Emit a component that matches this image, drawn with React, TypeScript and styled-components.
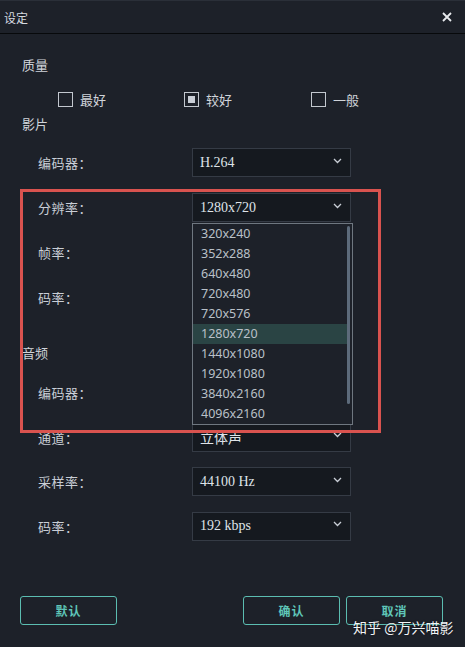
import React from "react";
import styled, { createGlobalStyle } from "styled-components";

const Global = createGlobalStyle`
  html, body { margin: 0; padding: 0; background: #1d2129; }
  #root { width: 465px; height: 647px; overflow: hidden; }
`;

const CJK = `"Noto Sans CJK SC", "Noto Sans", sans-serif`;
const SERIF = `"Liberation Serif", "Noto Sans CJK SC", serif`;

const Window = styled.div`
  position: relative;
  width: 465px;
  height: 647px;
  box-sizing: border-box;
  background: #1d2129;
  border-top: 1px solid #2a2f38;
  font-family: ${CJK};
  color: #c9ced6;
  display: flex;
  flex-direction: column;
`;

const TitleBar = styled.div`
  height: 33px;
  box-sizing: border-box;
  border-bottom: 1px solid #07090b;
  display: flex;
  align-items: center;
  justify-content: space-between;
  padding: 0 13px 0 4px;
  font-size: 12px;
  color: #d6dae0;
`;

const CloseBtn = styled.svg`
  width: 10px;
  height: 10px;
`;

const Body = styled.div`
  display: flex;
  flex-direction: column;
  padding: 0 0 0 22px;
  flex: 1;
`;

const SectionTitle = styled.div<{ $top: number }>`
  margin-top: ${(p) => p.$top}px;
  height: 20px;
  line-height: 20px;
  font-size: 13px;
  color: #d0d4da;
`;

const CheckRow = styled.div`
  margin-top: 14px;
  height: 20px;
  display: flex;
  align-items: center;
  padding-left: 36px;
`;

const CheckItem = styled.div<{ $w: number }>`
  width: ${(p) => p.$w}px;
  display: flex;
  align-items: center;
  gap: 7px;
  font-size: 13px;
  color: #d0d4da;
`;

const Box = styled.span<{ $checked?: boolean }>`
  width: 15px;
  height: 15px;
  box-sizing: border-box;
  border: 1.5px solid #c3c8cf;
  display: flex;
  align-items: center;
  justify-content: center;
  &::after {
    content: "";
    display: ${(p) => (p.$checked ? "block" : "none")};
    width: 7px;
    height: 7px;
    background: #c9ced6;
  }
`;

const Rows = styled.div<{ $top: number; $gap: number }>`
  margin-top: ${(p) => p.$top}px;
  display: flex;
  flex-direction: column;
  gap: ${(p) => p.$gap}px;
  padding-left: 16px;
`;

const Row = styled.div`
  height: 29px;
  display: grid;
  grid-template-columns: 154px 159px;
  align-items: center;
`;

const Label = styled.div`
  font-size: 13px;
  color: #c9ced6;
  letter-spacing: 0.5px;
`;

const Select = styled.div`
  height: 29px;
  box-sizing: border-box;
  border: 1px solid #353b45;
  background: #15191f;
  display: flex;
  align-items: center;
  justify-content: space-between;
  padding: 0 8px 0 7px;
  font-family: ${SERIF};
  font-size: 14px;
  color: #dfe3e8;
`;

const Chevron = styled.svg`
  width: 9px;
  height: 6px;
  margin-top: -4px;
  margin-left: auto;
`;

const Footer = styled.div`
  margin-top: auto;
  margin-bottom: 22px;
  display: flex;
  padding: 0 22px 0 20px;
  gap: 6px;
`;

const Spacer = styled.div`
  flex: 1;
`;

const Button = styled.div`
  width: 97px;
  height: 29px;
  box-sizing: border-box;
  border: 1px solid #5bbdb1;
  border-radius: 3px;
  display: flex;
  align-items: center;
  justify-content: center;
  font-size: 12px;
  font-weight: 700;
  color: #5fc6b8;
  letter-spacing: 1px;
`;

const Highlight = styled.div`
  position: absolute;
  left: 20px;
  top: 188px;
  width: 361px;
  height: 244px;
  box-sizing: border-box;
  border: 3px solid #d9534f;
  pointer-events: none;
`;

const Dropdown = styled.div`
  position: absolute;
  left: 192px;
  top: 222px;
  width: 161px;
  height: 202px;
  box-sizing: border-box;
  border: 1px solid #6f7780;
  background: #1d2129;
  padding: 0 5px 0 0;
  display: flex;
  flex-direction: column;
`;

const Option = styled.div<{ $active?: boolean }>`
  height: 20px;
  line-height: 20px;
  padding-left: 8px;
  font-family: "Noto Sans", "Open Sans", sans-serif;
  font-size: 12.5px;
  color: #b9c0c8;
  background: ${(p) => (p.$active ? "#2a4444" : "transparent")};
`;

const ScrollThumb = styled.div`
  position: absolute;
  right: 2px;
  top: 2px;
  width: 3px;
  height: 178px;
  border-radius: 2px;
  background: #5d6b7b;
`;

const Watermark = styled.div`
  position: absolute;
  left: 353px;
  top: 616px;
  font-size: 14px;
  color: #f2f4f6;
  white-space: nowrap;
  text-shadow: 0 0 2px rgba(0, 0, 0, 0.5);
`;

const ChevronIcon = () => (
  <Chevron viewBox="0 0 9 6">
    <path d="M1 1 L4.5 4.5 L8 1" fill="none" stroke="#c9ced6" strokeWidth="1.3" />
  </Chevron>
);

const Field = ({ label, value }: { label: string; value?: string }) => (
  <Row>
    <Label>{label}</Label>
    <Select>
      {value ? <span>{value}</span> : null}
      <ChevronIcon />
    </Select>
  </Row>
);

const resolutions = [
  "320x240",
  "352x288",
  "640x480",
  "720x480",
  "720x576",
  "1280x720",
  "1440x1080",
  "1920x1080",
  "3840x2160",
  "4096x2160",
];

export default function App() {
  return (
    <>
      <Global />
      <Window>
        <TitleBar>
          <span>设定</span>
          <CloseBtn viewBox="0 0 10 10">
            <path d="M1 1 L9 9 M9 1 L1 9" stroke="#e8ebee" strokeWidth="1.8" />
          </CloseBtn>
        </TitleBar>
        <Body>
          <SectionTitle $top={21}>质量</SectionTitle>
          <CheckRow>
            <CheckItem $w={126}>
              <Box />
              最好
            </CheckItem>
            <CheckItem $w={127}>
              <Box $checked />
              较好
            </CheckItem>
            <CheckItem $w={80}>
              <Box />
              一般
            </CheckItem>
          </CheckRow>
          <SectionTitle $top={5}>影片</SectionTitle>
          <Rows $top={14} $gap={16}>
            <Field label="编码器：" value="H.264" />
            <Field label="分辨率：" value="1280x720" />
            <Field label="帧率：" />
            <Field label="码率：" />
          </Rows>
          <SectionTitle $top={31}>音频</SectionTitle>
          <Rows $top={15} $gap={15.5}>
            <Field label="编码器：" />
            <Field label="通道：" value="立体声" />
            <Field label="采样率：" value="44100 Hz" />
            <Field label="码率：" value="192 kbps" />
          </Rows>
        </Body>
        <Footer>
          <Button>默认</Button>
          <Spacer />
          <Button>确认</Button>
          <Button>取消</Button>
        </Footer>
        <Highlight />
        <Dropdown>
          {resolutions.map((r) => (
            <Option key={r} $active={r === "1280x720"}>
              {r}
            </Option>
          ))}
          <ScrollThumb />
        </Dropdown>
        <Watermark>知乎 @万兴喵影</Watermark>
      </Window>
    </>
  );
}
